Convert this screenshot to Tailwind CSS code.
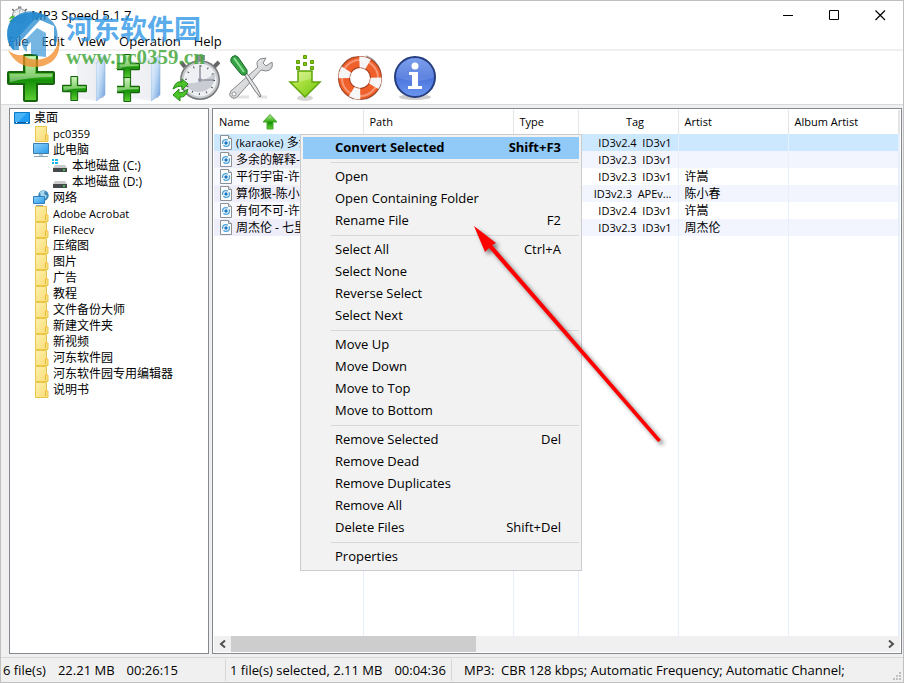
<!DOCTYPE html>
<html lang="zh-CN">
<head>
  <meta charset="UTF-8" />
  <meta name="viewport" content="width=device-width, initial-scale=1.0" />
  <title>MP3 Speed 5.1.7</title>
  <script src="https://cdn.jsdelivr.net/npm/@tailwindcss/browser@4"></script>
</head>
<body class="relative h-screen overflow-hidden bg-[#f0f0f0] text-black text-[13px] leading-4 font-['Open_Sans','Noto_Sans_CJK_SC',sans-serif]">

  <!-- Shared icons -->
  <svg class="absolute h-0 w-0" aria-hidden="true">
    <defs>
      <linearGradient id="green" x1="0" y1="0" x2="0" y2="1">
        <stop offset="0" stop-color="#b4ef9a" /><stop offset=".45" stop-color="#3fb41f" /><stop offset=".55" stop-color="#159008" /><stop offset="1" stop-color="#5fd035" />
      </linearGradient>
      <linearGradient id="lime" x1="0" y1="0" x2="1" y2="1">
        <stop offset="0" stop-color="#d4f560" /><stop offset="1" stop-color="#6fc410" />
      </linearGradient>
      <linearGradient id="folderBlue" x1="0" y1="0" x2="1" y2="1">
        <stop offset="0" stop-color="#eef4fc" /><stop offset=".5" stop-color="#c3dcf6" /><stop offset="1" stop-color="#6d9fdc" />
      </linearGradient>
      <linearGradient id="paper" x1="0" y1="0" x2="1" y2="0">
        <stop offset="0" stop-color="#ffffff" /><stop offset="1" stop-color="#d9dce2" />
      </linearGradient>
      <linearGradient id="screen" x1="0" y1="0" x2="1" y2="1">
        <stop offset="0" stop-color="#8fd3fb" /><stop offset="1" stop-color="#2a9ae8" />
      </linearGradient>
      <linearGradient id="metal" x1="0" y1="0" x2="1" y2="1">
        <stop offset="0" stop-color="#fafafa" /><stop offset="1" stop-color="#b9bbbe" />
      </linearGradient>
      <linearGradient id="info" x1="0" y1="0" x2="0" y2="1">
        <stop offset="0" stop-color="#6b93ea" /><stop offset=".5" stop-color="#4a74dc" /><stop offset="1" stop-color="#6c96f0" />
      </linearGradient>
      <linearGradient id="yellow" x1="0" y1="0" x2="1" y2="1">
        <stop offset="0" stop-color="#fff0ae" /><stop offset="1" stop-color="#fadb74" />
      </linearGradient>
    </defs>
    <symbol id="i-plus" viewBox="0 0 48 48">
      <path d="M18 1h11q1 0 1 1v16h16q1 0 1 1v10q0 1-1 1H30v16q0 1-1 1H18q-1 0-1-1V30H2q-1 0-1-1V19q0-1 1-1h15V2q0-1 1-1z" fill="url(#green)" stroke="#17630f" stroke-width="2" />
      <path d="M19 3h9v17h17v3Q23 23 3 28v-8h16z" fill="#fff" opacity=".38" />
    </symbol>
    <symbol id="i-bluefolder" viewBox="0 0 30 48">
      <path d="M2 4h22l3 4v36H2z" fill="url(#paper)" />
      <path d="M28 0v41l-9 6V10z" fill="url(#folderBlue)" stroke="#8fb3dc" stroke-width=".6" />
      <path d="M0 6l19 4v37L0 44z" fill="#eef0f3" opacity=".85" />
    </symbol>
    <symbol id="i-folder" viewBox="0 0 14 16">
      <path d="M.5 .5h11v8.500h1.500v6.500H.5z" fill="url(#yellow)" stroke="#e9c64a" />
      <path d="M10.500 14V10q0-1.500 1-1.500" fill="none" stroke="#e2bb3d" />
    </symbol>
    <symbol id="i-desktop" viewBox="0 0 16 12">
      <path d="M.5 .5h15v11H.5z" fill="url(#screen)" stroke="#0b78c8" />
      <path d="M1 1h14v9H1z" fill="#1e9df2" /><path d="M1 1h12L4 10H1z" fill="#48b4f7" />
      <path d="M1 10.500h14" stroke="#155a94" /><path d="M2 10.500h1M12 10.500h2" stroke="#fff" />
    </symbol>
    <symbol id="i-pc" viewBox="0 0 16 15">
      <path d="M.5 .5h15v10H.5z" fill="url(#screen)" stroke="#3c7fae" />
      <path d="M6 11h4v2H6z" fill="#b9cbd8" /><path d="M1 13.500h14" stroke="#8ba3b3" />
    </symbol>
    <symbol id="i-disk" viewBox="0 0 16 16">
      <path d="M3 7h10l2 3H1z" fill="#c9cbcd" /><path d="M1 10h14v4H1z" fill="#45494c" />
      <path d="M11 12h2" stroke="#44e052" stroke-width="1.500" />
    </symbol>
    <symbol id="i-net" viewBox="0 0 16 16">
      <circle cx="10.500" cy="5.500" r="5.200" fill="#3e87b8" /><path d="M7 2q3-2 5-1l-1 3 3 2-2 3-4-2z" fill="#a8d8ee" />
      <path d="M.5 6.500h11v7H.5z" fill="url(#screen)" stroke="#2e7fba" /><path d="M3 15.500h7" stroke="#8ba3b3" />
    </symbol>
    <symbol id="i-audio" viewBox="0 0 12 15">
      <path d="M.5 .5h8l3 3v11H.5z" fill="#fafcfd" stroke="#8b9196" /><path d="M8.500 .5v3h3" fill="#dfe3e6" stroke="#8b9196" />
      <circle cx="6" cy="8" r="3.400" fill="none" stroke="#4aa3dc" stroke-width="1.300" stroke-dasharray="8 1.500" /><circle cx="6" cy="8" r="1.700" fill="#1a76c4" />
    </symbol>
    <symbol id="i-watch" viewBox="0 0 48 48">
      <path d="M24 1h9v5h-9z" fill="#8c8f93" /><path d="M9 8l4 5M47 8l-5 5" stroke="#666" stroke-width="4" />
      <circle cx="28" cy="26" r="20" fill="#77797c" /><circle cx="28" cy="26" r="18.500" fill="#c6c8ca" /><circle cx="28" cy="26" r="16.500" fill="#eef0f3" />
      <path d="M12 29q17 2 31-10a16.500 16.500 0 0 1-31 10z" fill="#c9ccd2" />
      <circle cx="28" cy="26" r="14" fill="none" stroke="#4f5359" stroke-width="2" stroke-dasharray="1 6.330" />
      <path d="M28 11v15h14" fill="none" stroke="#777b85" stroke-width="1.200" /><circle cx="28" cy="26" r="2" fill="#9098a8" />
      <path d="M1 35q3-9 9-7V25l6 5-6 6v-4q-5 0-9 3z" fill="#4cc52b" stroke="#258a18" />
      <path d="M16 35q-2 9-8 8v4l-7-6 6-6v4q5 0 9-4z" fill="#4cc52b" stroke="#258a18" />
    </symbol>
  </svg>

  <div class="flex h-full flex-col border border-[#c0c0c0]">

    <!-- Title bar -->
    <header class="flex h-7 shrink-0 items-center justify-between bg-white">
      <div class="flex items-center gap-1 pl-2">
        <svg class="h-[18px] w-[18px]"><use href="#i-watch" /></svg>
        <h1>MP3 Speed 5.1.7</h1>
      </div>
      <div class="flex h-full">
        <button aria-label="Minimize" class="flex w-[46px] items-center justify-center">
          <svg width="10" height="11"><path d="M0 5.500h10" stroke="#000" /></svg>
        </button>
        <button aria-label="Maximize" class="flex w-[46px] items-center justify-center">
          <svg width="11" height="11"><path d="M.5 .5h9v9h-9z" fill="none" stroke="#000" /></svg>
        </button>
        <button aria-label="Close" class="flex w-[46px] items-center justify-center">
          <svg width="11" height="11"><path d="M.5 .5l9.500 9.500M10 .5L.5 10" stroke="#000" stroke-width="1.200" /></svg>
        </button>
      </div>
    </header>

    <!-- Menu bar -->
    <nav class="flex h-[22px] shrink-0 items-center gap-[13px] border-b-2 border-[#f0f0f0] bg-white pt-[3px] pl-[7px]">
      <button>File</button>
      <button>Edit</button>
      <button>View</button>
      <button>Operation</button>
      <button>Help</button>
    </nav>

    <!-- Toolbar -->
    <div class="flex h-[54px] shrink-0 items-center gap-[7px] border-b border-[#d9dadd] bg-white pl-[6px]">
      <button aria-label="Add files"><svg class="h-12 w-12"><use href="#i-plus" /></svg></button>
      <button aria-label="Add folder">
        <svg class="h-12 w-12" viewBox="0 0 48 48"><use href="#i-bluefolder" x="15" width="30" height="48" /><use href="#i-plus" y="22" width="25" height="25" /></svg>
      </button>
      <button aria-label="Add folder tree">
        <svg class="h-12 w-12" viewBox="0 0 48 48"><use href="#i-bluefolder" x="15" width="30" height="48" /><use href="#i-plus" x="-2" width="25" height="25" /><use href="#i-plus" x="-2" y="23" width="25" height="25" /></svg>
      </button>
      <button aria-label="Convert"><svg class="h-12 w-12"><use href="#i-watch" /></svg></button>
      <button aria-label="Settings">
        <svg class="h-12 w-12" viewBox="0 0 48 48">
          <path d="M6 43h16M30 43h10" stroke="#e2e2e2" stroke-width="3" />
          <path d="M4 37L31 13q-3-5 2-8l6-1-3 5 3 3 6-4q2 8-6 9l-5-1L11 42q-3 4-7 1-3-2 0-6z" fill="url(#metal)" stroke="#858789" />
          <circle cx="7" cy="40" r="2" fill="#fff" stroke="#999" />
          <path d="M17 20l2-2 11 16 4 8-1 1-5-6z" fill="#e4e5e6" stroke="#77797b" />
          <path d="M5 3q3-3 6 0l9 13q1 4-2 5-3 1-5-2L4 8q-1-3 1-5z" fill="#35a047" stroke="#1d6d2b" />
          <path d="M7 4l10 14" stroke="#8be08f" stroke-width="2" />
        </svg>
      </button>
      <button aria-label="Download">
        <svg class="h-12 w-12" viewBox="0 0 48 48">
          <ellipse cx="23" cy="44" rx="8" ry="3" fill="#bbb" opacity=".6" />
          <path d="M21.500 1.500h3v3h-3zM14.500 6.500h3v3h-3zM28.500 6.500h3v3h-3zM21.500 8.500h3v3h-3zM14.500 12.500h3v3h-3zM28.500 12.500h3v3h-3z" fill="#7fca0c" stroke="#5c9a08" />
          <path d="M16 17h14v11h8L23 43 8 28h8z" fill="url(#lime)" stroke="#5fa50e" stroke-width="1.500" />
          <path d="M17 18h12v7L11 29h6z" fill="#fff" opacity=".25" />
        </svg>
      </button>
      <button aria-label="Help">
        <svg class="h-12 w-12" viewBox="0 0 48 48">
          <path d="M17 3Q6 7 2 18M43 17Q40 6 29 2M44 30q-4 11-15 15M3 31q4 10 14 14" fill="none" stroke="#a5a5a5" stroke-width="1.500" />
          <circle cx="23" cy="24" r="16" fill="none" stroke="#a23d1c" stroke-width="12" />
          <circle cx="23" cy="24" r="16" fill="none" stroke="#f0602b" stroke-width="10" />
          <circle cx="23" cy="24" r="16" fill="none" stroke="#f5f5f5" stroke-width="11" stroke-dasharray="9 16.130" transform="rotate(-92 23 24)" />
          <circle cx="23" cy="24" r="18" fill="none" stroke="#fff" stroke-width="2" opacity=".35" />
        </svg>
      </button>
      <button aria-label="About">
        <svg class="h-12 w-12" viewBox="0 0 48 48">
          <ellipse cx="23" cy="43" rx="16" ry="3" fill="#999" opacity=".5" />
          <circle cx="23" cy="23" r="20" fill="url(#info)" stroke="#263e80" stroke-width="2" />
          <path d="M4 23a19 19 0 0 1 38 0q-18 8-38 0z" fill="#fff" opacity=".12" />
          <circle cx="23" cy="12" r="3.500" fill="#fff" />
          <path d="M17 18h9v14h4v3H16v-3h4V21h-3z" fill="#fff" />
        </svg>
      </button>
    </div>

    <!-- Folder tree and file list -->
    <main class="flex min-h-0 flex-1 gap-[3px] pt-[3px] pr-[1px] pb-[3px] pl-2 text-[12px]">
      <aside class="w-[200px] shrink-0 border border-[#828790] bg-white pt-px pl-1">
        <ul class="whitespace-nowrap">
          <li class="flex h-4 items-center gap-1"><svg class="h-3 w-4"><use href="#i-desktop" /></svg>桌面</li>
          <li class="flex h-4 items-center gap-1 pl-[21px] text-[11px]"><svg class="h-4 w-[14px]"><use href="#i-folder" /></svg>pc0359</li>
          <li class="flex h-4 items-center gap-1 pl-[19px]"><svg class="h-[15px] w-4"><use href="#i-pc" /></svg>此电脑</li>
          <li class="flex h-4 items-center gap-1 pl-[38px]">
            <svg class="h-4 w-4"><use href="#i-disk" /><path d="M0 1h2v2H0zM3 1h3v2H3zM0 4h2v2H0zM3 4h3v2H3z" fill="#16b5ee" /></svg>本地磁盘 (C:)
          </li>
          <li class="flex h-4 items-center gap-1 pl-[38px]"><svg class="h-4 w-4"><use href="#i-disk" /></svg>本地磁盘 (D:)</li>
          <li class="flex h-4 items-center gap-1 pl-[19px]"><svg class="h-4 w-4"><use href="#i-net" /></svg>网络</li>
          <li class="flex h-4 items-center gap-1 pl-[21px] text-[11px]"><svg class="h-4 w-[14px]"><use href="#i-folder" /></svg>Adobe Acrobat</li>
          <li class="flex h-4 items-center gap-1 pl-[21px] text-[11px]"><svg class="h-4 w-[14px]"><use href="#i-folder" /></svg>FileRecv</li>
          <li class="flex h-4 items-center gap-1 pl-[21px]"><svg class="h-4 w-[14px]"><use href="#i-folder" /></svg>压缩图</li>
          <li class="flex h-4 items-center gap-1 pl-[21px]"><svg class="h-4 w-[14px]"><use href="#i-folder" /></svg>图片</li>
          <li class="flex h-4 items-center gap-1 pl-[21px]"><svg class="h-4 w-[14px]"><use href="#i-folder" /></svg>广告</li>
          <li class="flex h-4 items-center gap-1 pl-[21px]"><svg class="h-4 w-[14px]"><use href="#i-folder" /></svg>教程</li>
          <li class="flex h-4 items-center gap-1 pl-[21px]"><svg class="h-4 w-[14px]"><use href="#i-folder" /></svg>文件备份大师</li>
          <li class="flex h-4 items-center gap-1 pl-[21px]"><svg class="h-4 w-[14px]"><use href="#i-folder" /></svg>新建文件夹</li>
          <li class="flex h-4 items-center gap-1 pl-[21px]"><svg class="h-4 w-[14px]"><use href="#i-folder" /></svg>新视频</li>
          <li class="flex h-4 items-center gap-1 pl-[21px]"><svg class="h-4 w-[14px]"><use href="#i-folder" /></svg>河东软件园</li>
          <li class="flex h-4 items-center gap-1 pl-[21px]"><svg class="h-4 w-[14px]"><use href="#i-folder" /></svg>河东软件园专用编辑器</li>
          <li class="flex h-4 items-center gap-1 pl-[21px]"><svg class="h-4 w-[14px]"><use href="#i-folder" /></svg>说明书</li>
        </ul>
      </aside>

      <section class="flex min-w-0 flex-1 flex-col border border-[#828790] bg-white p-px">
        <div class="min-h-0 flex-1">
          <table class="h-full w-full table-fixed border-collapse whitespace-nowrap">
            <colgroup>
              <col class="w-[149px]" /><col class="w-[150px]" /><col class="w-[65px]" /><col class="w-[100px]" /><col class="w-[110px]" /><col class="w-[110px]" /><col />
            </colgroup>
            <thead>
              <tr class="h-6 text-left text-[11px] *:border-r *:border-[#e5e5e5] *:p-0 *:pl-[6px] *:font-normal">
                <th class="!pl-[5px]">
                  <span class="flex items-center gap-3">Name
                    <svg width="16" height="16"><path d="M8 .5l7 7.500h-4v7H5V8H1z" fill="url(#green)" stroke="#4aa82c" /></svg>
                  </span>
                </th>
                <th>Path</th>
                <th>Type</th>
                <th class="!pl-[14px] text-center">Tag</th>
                <th>Artist</th>
                <th>Album Artist</th>
                <th></th>
              </tr>
            </thead>
            <tbody class="*:*:border-r *:*:border-[#e6effb] *:*:p-0">
              <tr class="h-[17px] bg-[#cce8ff]">
                <td><span class="flex items-center gap-1 pl-[6px]"><svg class="h-[15px] w-3"><use href="#i-audio" /></svg><span><span class="text-[11px]">(karaoke)</span> 多余的解释</span></span></td>
                <td></td><td></td>
                <td class="!pr-[6px] text-right text-[11px]">ID3v2.4&nbsp; ID3v1</td><td></td><td></td><td></td>
              </tr>
              <tr class="h-[17px] bg-[#f2f5fd]">
                <td class="bg-[#eeeefa]"><span class="flex items-center gap-1 pl-[6px]"><svg class="h-[15px] w-3"><use href="#i-audio" /></svg>多余的解释-许嵩</span></td>
                <td></td><td></td>
                <td class="!pr-[6px] text-right text-[11px]">ID3v2.3&nbsp; ID3v1</td><td></td><td></td><td></td>
              </tr>
              <tr class="h-[17px]">
                <td class="bg-[#f8f8ff]"><span class="flex items-center gap-1 pl-[6px]"><svg class="h-[15px] w-3"><use href="#i-audio" /></svg>平行宇宙-许嵩</span></td>
                <td></td><td></td>
                <td class="!pr-[6px] text-right text-[11px]">ID3v2.3&nbsp; ID3v1</td><td class="!pl-[6px]">许嵩</td><td></td><td></td>
              </tr>
              <tr class="h-[17px] bg-[#f2f5fd]">
                <td class="bg-[#eeeefa]"><span class="flex items-center gap-1 pl-[6px]"><svg class="h-[15px] w-3"><use href="#i-audio" /></svg>算你狠-陈小春</span></td>
                <td></td><td></td>
                <td class="!pr-[6px] text-right text-[11px]">ID3v2.3&nbsp; APEv...</td><td class="!pl-[6px]">陈小春</td><td></td><td></td>
              </tr>
              <tr class="h-[17px]">
                <td class="bg-[#f8f8ff]"><span class="flex items-center gap-1 pl-[6px]"><svg class="h-[15px] w-3"><use href="#i-audio" /></svg>有何不可-许嵩</span></td>
                <td></td><td></td>
                <td class="!pr-[6px] text-right text-[11px]">ID3v2.4&nbsp; ID3v1</td><td class="!pl-[6px]">许嵩</td><td></td><td></td>
              </tr>
              <tr class="h-[17px] bg-[#f2f5fd]">
                <td class="bg-[#eeeefa]"><span class="flex items-center gap-1 pl-[6px]"><svg class="h-[15px] w-3"><use href="#i-audio" /></svg>周杰伦 - 七里香</span></td>
                <td></td><td></td>
                <td class="!pr-[6px] text-right text-[11px]">ID3v2.3&nbsp; ID3v1</td><td class="!pl-[6px]">周杰伦</td><td></td><td></td>
              </tr>
              <tr><td></td><td></td><td></td><td></td><td></td><td></td><td></td></tr>
            </tbody>
          </table>
        </div>

        <!-- Horizontal scroll bar -->
        <div class="flex h-4 shrink-0 bg-[#f0f0f0]">
          <button aria-label="Scroll left" class="flex w-[17px] items-center justify-center">
            <svg width="7" height="8"><path d="M6 .5L2 4l4 3.500" fill="none" stroke="#505050" stroke-width="2" /></svg>
          </button>
          <div class="flex-1"><div class="h-full w-3/8 bg-[#cdcdcd]"></div></div>
          <button aria-label="Scroll right" class="flex w-[17px] items-center justify-center">
            <svg width="7" height="8"><path d="M1 .5L5 4 1 7.500" fill="none" stroke="#505050" stroke-width="2" /></svg>
          </button>
        </div>
      </section>
    </main>

    <!-- Status bar -->
    <footer class="flex h-[25px] shrink-0 items-center border-t border-[#d7d7d7] whitespace-pre">
      <div class="flex w-[225px] gap-3 border-r border-[#d7d7d7] py-[3px] pl-[2px]"><span>6 file(s)</span><span>22.21 MB</span><span>00:26:15</span></div>
      <div class="flex w-[226px] gap-3 border-r border-[#d7d7d7] py-[3px] pl-1"><span>1 file(s) selected, 2.11 MB</span><span>00:04:36</span></div>
      <div class="flex-1 pl-3">MP3:  CBR 128 kbps; Automatic Frequency; Automatic Channel;</div>
      <svg class="mr-[2px] mb-[2px] self-end" width="8" height="8"><path d="M6 0h2v2H6zM3 3h2v2H3zM6 3h2v2H6zM0 6h2v2H0zM3 6h2v2H3zM6 6h2v2H6z" fill="#bfbfbf" /></svg>
    </footer>
  </div>

  <!-- Context menu -->
  <div role="menu" class="absolute top-[134px] left-[300px] w-[282px] border border-[#ccc] bg-[#f2f2f2] p-[2px] *:[button]:pb-[2px]">
    <button role="menuitem" class="flex h-[22px] w-full items-center justify-between bg-[#91c9f7] pr-[18px] pl-8 font-bold"><span>Convert Selected</span><span>Shift+F3</span></button>
    <hr class="my-[3px] ml-7 border-[#d7d7d7]" />
    <button role="menuitem" class="flex h-[22px] w-full items-center pl-8">Open</button>
    <button role="menuitem" class="flex h-[22px] w-full items-center pl-8">Open Containing Folder</button>
    <button role="menuitem" class="flex h-[22px] w-full items-center justify-between pr-[18px] pl-8"><span>Rename File</span><span>F2</span></button>
    <hr class="my-[3px] ml-7 border-[#d7d7d7]" />
    <button role="menuitem" class="flex h-[22px] w-full items-center justify-between pr-[18px] pl-8"><span>Select All</span><span>Ctrl+A</span></button>
    <button role="menuitem" class="flex h-[22px] w-full items-center pl-8">Select None</button>
    <button role="menuitem" class="flex h-[22px] w-full items-center pl-8">Reverse Select</button>
    <button role="menuitem" class="flex h-[22px] w-full items-center pl-8">Select Next</button>
    <hr class="my-[3px] ml-7 border-[#d7d7d7]" />
    <button role="menuitem" class="flex h-[22px] w-full items-center pl-8">Move Up</button>
    <button role="menuitem" class="flex h-[22px] w-full items-center pl-8">Move Down</button>
    <button role="menuitem" class="flex h-[22px] w-full items-center pl-8">Move to Top</button>
    <button role="menuitem" class="flex h-[22px] w-full items-center pl-8">Move to Bottom</button>
    <hr class="my-[3px] ml-7 border-[#d7d7d7]" />
    <button role="menuitem" class="flex h-[22px] w-full items-center justify-between pr-[18px] pl-8"><span>Remove Selected</span><span>Del</span></button>
    <button role="menuitem" class="flex h-[22px] w-full items-center pl-8">Remove Dead</button>
    <button role="menuitem" class="flex h-[22px] w-full items-center pl-8">Remove Duplicates</button>
    <button role="menuitem" class="flex h-[22px] w-full items-center pl-8">Remove All</button>
    <button role="menuitem" class="flex h-[22px] w-full items-center justify-between pr-[18px] pl-8"><span>Delete Files</span><span>Shift+Del</span></button>
    <hr class="my-[3px] ml-7 border-[#d7d7d7]" />
    <button role="menuitem" class="flex h-[22px] w-full items-center pl-8">Properties</button>
  </div>

  <!-- Arrow -->
  <svg class="pointer-events-none absolute top-[217px] left-[465px] drop-shadow-[3px_3px_2px_rgba(0,0,0,0.5)]" width="210" height="240" viewBox="0 0 210 240">
    <path d="M9 9l22 17-4 2L196 223l-3 2L24 31l-4 4z" fill="#f00" />
  </svg>

  <!-- Site watermark -->
  <div class="pointer-events-none absolute top-[10px] left-[5px] flex gap-[5px]">
    <svg width="56" height="58" viewBox="0 0 56 58">
      <path d="M3 29Q-1 6 22 3q12-2 22 4-10-1-17 5L9 32v8q-5-4-6-11z" fill="#1c83cc" opacity=".8" />
      <path d="M7 10Q17-1 31 2q14 3 20 15 4 12-2 20V16L35 10 14 33v7H8q-6-6-6-15t5-15z" fill="#2489cf" opacity=".75" />
      <path d="M17 33l15-15 9 5v24q-8 0-15-3V32l-4 4v6q-5-3-5-9z" fill="#3a97d5" opacity=".7" />
      <path d="M3 40q6 6 15 5 7 6 19 4 13-3 17-20 3 21-16 27-25 5-35-16z" fill="#f28a24" opacity=".75" />
    </svg>
    <div class="font-bold whitespace-nowrap">
      <p class="pt-[3px] text-[27px] leading-8 text-[#2c95e6]/80">河东软件园</p>
      <p class="font-['Liberation_Serif',serif] text-[21px] leading-6 text-[#45a83c]/85">www.pc0359.cn</p>
    </div>
  </div>

</body>
</html>
